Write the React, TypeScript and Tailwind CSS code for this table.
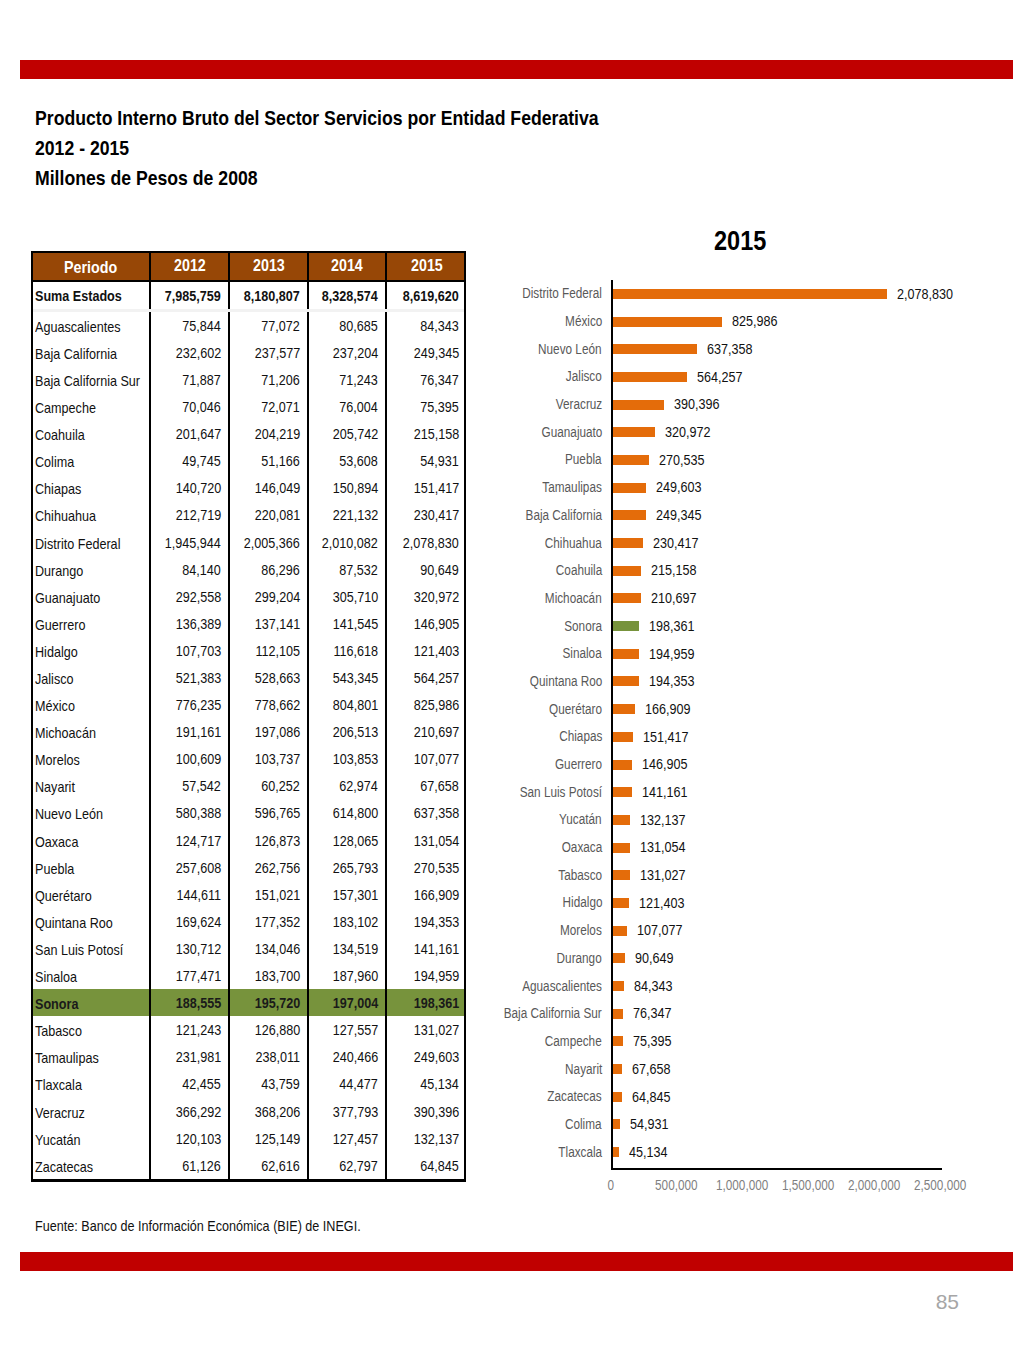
import React from "react"

const font = "font-['Liberation_Sans',Arial,sans-serif]"
// Liberation Sans comprimida, como Arial Narrow
const sx = "inline-block whitespace-nowrap scale-x-[0.84]"

type Fila = [string, string, string, string, string]

const filas: Fila[] = [
  ["Aguascalientes", "75,844", "77,072", "80,685", "84,343"],
  ["Baja California", "232,602", "237,577", "237,204", "249,345"],
  ["Baja California Sur", "71,887", "71,206", "71,243", "76,347"],
  ["Campeche", "70,046", "72,071", "76,004", "75,395"],
  ["Coahuila", "201,647", "204,219", "205,742", "215,158"],
  ["Colima", "49,745", "51,166", "53,608", "54,931"],
  ["Chiapas", "140,720", "146,049", "150,894", "151,417"],
  ["Chihuahua", "212,719", "220,081", "221,132", "230,417"],
  ["Distrito Federal", "1,945,944", "2,005,366", "2,010,082", "2,078,830"],
  ["Durango", "84,140", "86,296", "87,532", "90,649"],
  ["Guanajuato", "292,558", "299,204", "305,710", "320,972"],
  ["Guerrero", "136,389", "137,141", "141,545", "146,905"],
  ["Hidalgo", "107,703", "112,105", "116,618", "121,403"],
  ["Jalisco", "521,383", "528,663", "543,345", "564,257"],
  ["México", "776,235", "778,662", "804,801", "825,986"],
  ["Michoacán", "191,161", "197,086", "206,513", "210,697"],
  ["Morelos", "100,609", "103,737", "103,853", "107,077"],
  ["Nayarit", "57,542", "60,252", "62,974", "67,658"],
  ["Nuevo León", "580,388", "596,765", "614,800", "637,358"],
  ["Oaxaca", "124,717", "126,873", "128,065", "131,054"],
  ["Puebla", "257,608", "262,756", "265,793", "270,535"],
  ["Querétaro", "144,611", "151,021", "157,301", "166,909"],
  ["Quintana Roo", "169,624", "177,352", "183,102", "194,353"],
  ["San Luis Potosí", "130,712", "134,046", "134,519", "141,161"],
  ["Sinaloa", "177,471", "183,700", "187,960", "194,959"],
  ["Sonora", "188,555", "195,720", "197,004", "198,361"],
  ["Tabasco", "121,243", "126,880", "127,557", "131,027"],
  ["Tamaulipas", "231,981", "238,011", "240,466", "249,603"],
  ["Tlaxcala", "42,455", "43,759", "44,477", "45,134"],
  ["Veracruz", "366,292", "368,206", "377,793", "390,396"],
  ["Yucatán", "120,103", "125,149", "127,457", "132,137"],
  ["Zacatecas", "61,126", "62,616", "62,797", "64,845"],
]

// datos de la gráfica 2015, ya ordenados de mayor a menor
const grafica: [string, number][] = [
  ["Distrito Federal", 2078830],
  ["México", 825986],
  ["Nuevo León", 637358],
  ["Jalisco", 564257],
  ["Veracruz", 390396],
  ["Guanajuato", 320972],
  ["Puebla", 270535],
  ["Tamaulipas", 249603],
  ["Baja California", 249345],
  ["Chihuahua", 230417],
  ["Coahuila", 215158],
  ["Michoacán", 210697],
  ["Sonora", 198361],
  ["Sinaloa", 194959],
  ["Quintana Roo", 194353],
  ["Querétaro", 166909],
  ["Chiapas", 151417],
  ["Guerrero", 146905],
  ["San Luis Potosí", 141161],
  ["Yucatán", 132137],
  ["Oaxaca", 131054],
  ["Tabasco", 131027],
  ["Hidalgo", 121403],
  ["Morelos", 107077],
  ["Durango", 90649],
  ["Aguascalientes", 84343],
  ["Baja California Sur", 76347],
  ["Campeche", 75395],
  ["Nayarit", 67658],
  ["Zacatecas", 64845],
  ["Colima", 54931],
  ["Tlaxcala", 45134],
]

const MAX = 2500000
const ANCHO = 329

const cols = "grid grid-cols-[118px_79px_79px_78px_79px]"

function Tabla() {
  return (
    <div className={`w-[435px] border-2 border-b-[3px] border-black ${font} text-[15px] text-[#111]`}>
      {/* Encabezado */}
      <div className={`${cols} h-[29px] bg-[#974706] text-white font-bold text-[17px] border-b-2 border-black`}>
        <div className="flex items-center justify-center border-r-2 border-black">
          <span className={`${sx} origin-center`}>Periodo</span>
        </div>
        {["2012", "2013", "2014", "2015"].map((a, i) => (
          <div key={a} className={`flex items-center justify-center pb-[4px] ${i < 3 ? "border-r-2 border-black" : ""}`}>
            <span className={`${sx} origin-center`}>{a}</span>
          </div>
        ))}
      </div>
      {/* Suma */}
      <div className={`${cols} h-[30px] font-bold bg-white border-b-[3px] border-[#f2f2f2]`}>
        <div className="flex items-center pl-[2px] pt-[2px] border-r-2 border-black">
          <span className={`${sx} origin-left`}>Suma Estados</span>
        </div>
        {["7,985,759", "8,180,807", "8,328,574", "8,619,620"].map((v, i) => (
          <div key={v} className={`flex items-center justify-end pr-[7px] pt-[2px] ${i < 3 ? "border-r-2 border-black" : ""}`}>
            <span className={`${sx} origin-right`}>{v}</span>
          </div>
        ))}
      </div>
      {filas.map((f) => {
        const sonora = f[0] === "Sonora"
        return (
          <div key={f[0]} className={`${cols} h-[27.1px] ${sonora ? "bg-[#77933c] font-bold text-[#1a1a1a]" : ""}`}>
            <div className="flex items-center pl-[2px] pt-[3px] border-r-2 border-black">
              <span className={`${sx} origin-left`}>{f[0]}</span>
            </div>
            {f.slice(1).map((v, i) => (
              <div key={i} className={`flex items-center justify-end pr-[7px] pt-[1px] ${i < 3 ? "border-r-2 border-black" : ""}`}>
                <span className={`${sx} origin-right`}>{v}</span>
              </div>
            ))}
          </div>
        )
      })}
    </div>
  )
}

function Grafica() {
  const ticks = ["0", "500,000", "1,000,000", "1,500,000", "2,000,000", "2,500,000"]
  return (
    <div className={`${font} flex flex-col`}>
      <div className="h-[47px] flex items-center pl-[219px] pb-[4px] text-[28px] font-bold text-black">
        <span className={`${sx} origin-center`}>2015</span>
      </div>
      <div className="flex mt-[14px]">
        <div className="w-[112px] flex flex-col mr-[9px]">
          {grafica.map(([n]) => (
            <div key={n} className="h-[27.7px] flex items-center justify-end text-[14px] text-[#595959]">
              <span className={`${sx} origin-right`}>{n}</span>
            </div>
          ))}
        </div>
        <div className="w-[331px] border-l-2 border-b-2 border-black flex flex-col pb-[2px]">
          {grafica.map(([n, v]) => (
            <div key={n} className="h-[27.7px] flex items-center">
              <div
                className={`h-[10px] shrink-0 ${n === "Sonora" ? "bg-[#77933c]" : "bg-[#e46c0a]"}`}
                style={{ width: (v / MAX) * ANCHO }}
              />
              <span className={`${sx} origin-left ml-[10px] text-[15px] text-[#111]`}>{v.toLocaleString("en-US")}</span>
            </div>
          ))}
        </div>
      </div>
      <div className="flex ml-[88px] mt-[5px]">
        {ticks.map((t) => (
          <div key={t} className="w-[65.8px] flex justify-center text-[14px] text-[#7f7f7f]">
            <span className={`${sx} origin-center`}>{t}</span>
          </div>
        ))}
      </div>
    </div>
  )
}

export default function App() {
  return (
    <div className="w-[1024px] h-[1365px] bg-white flex flex-col">
      <div className="mt-[60px] ml-[20px] w-[993px] h-[19px] bg-[#c00000]" />

      <div className={`${font} font-bold text-[21px] text-black leading-[30px] pl-[35px] mt-[24px]`}>
        <div><span className={`${sx} origin-left`}>Producto Interno Bruto del Sector Servicios por Entidad Federativa</span></div>
        <div><span className={`${sx} origin-left`}>2012 - 2015</span></div>
        <div><span className={`${sx} origin-left`}>Millones de Pesos de 2008</span></div>
      </div>

      <div className="flex items-start mt-[2px]">
        <div className="ml-[31px] mt-[56px]">
          <Tabla />
        </div>
        <div className="ml-[24px] mt-[24px]">
          <Grafica />
        </div>
      </div>

      <div className={`${font} text-[15px] text-[#111] pl-[35px] mt-[19px]`}>
        <span className={`${sx} origin-left`}>Fuente: Banco de Información Económica (BIE) de INEGI.</span>
      </div>

      <div className="mt-[14px] ml-[20px] w-[993px] h-[19px] bg-[#c00000]" />

      <div className="flex justify-end pr-[65px] mt-[15px]">
        <span className={`${font} text-[21px] text-[#a6a6a6]`}>85</span>
      </div>
    </div>
  )
}
